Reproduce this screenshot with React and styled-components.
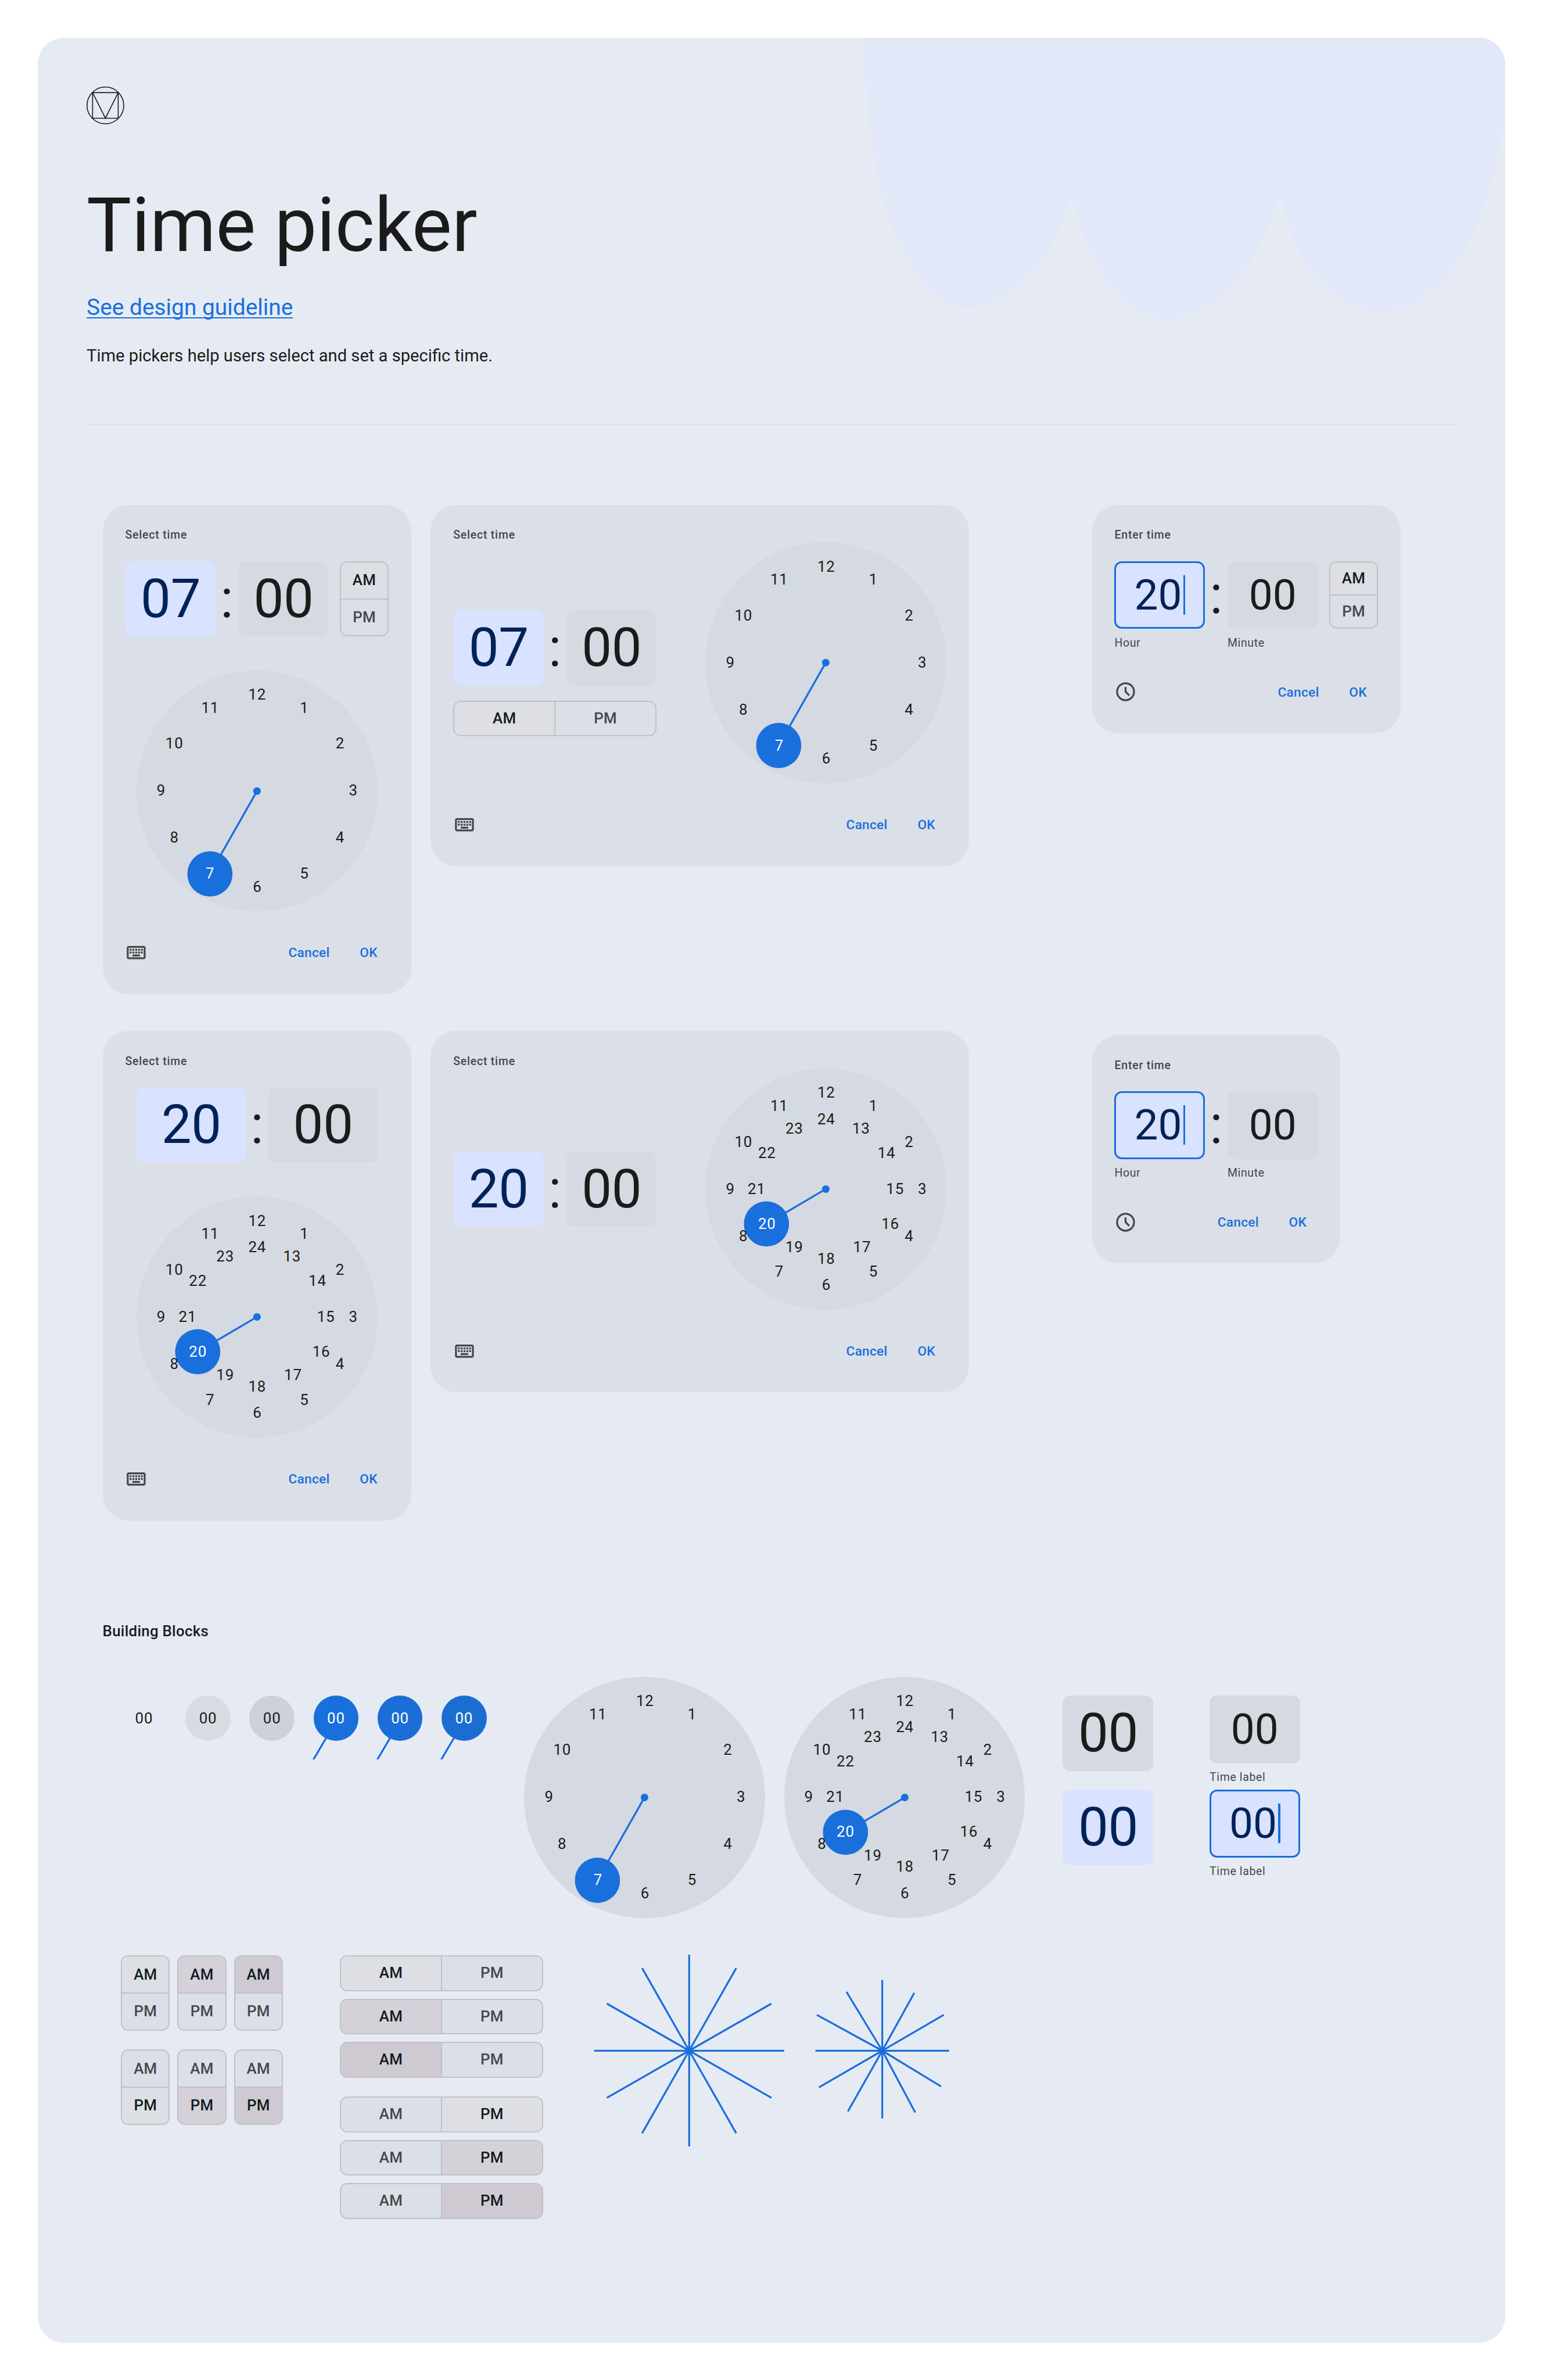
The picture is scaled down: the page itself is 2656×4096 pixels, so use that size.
import React from 'react';
import styled, { createGlobalStyle, css } from 'styled-components';

const color = {
  sheet: '#e6ebf3',
  scallop: '#e2e8f7',
  card: '#dbdfe7',
  face: '#d5d9e1',
  primary: '#196fdc',
  primaryContainer: '#d9e2ff',
  onPrimaryContainer: '#002257',
  ink: '#1b1b1b',
  muted: '#44474a',
  outline: '#c0c1c5',
  divider: '#e0dfe3',
  selectedInk: '#101a22',
};

const periodFill = {
  enabled: '#dedfe4',
  hovered: '#d5d1d9',
  pressed: '#cfc9d1',
};

const GlobalStyle = createGlobalStyle`
  html, body {
    margin: 0;
    background: #fff;
    overflow: hidden;
  }
  body {
    font-family: Roboto, "Liberation Sans", sans-serif;
    color: ${color.ink};
  }
  *, *::before, *::after { box-sizing: border-box; }
`;

/* The board is designed in dp and enlarged to the window as a whole. */
const Board = styled.main`
  zoom: 1.6204;
  width: 1639px;
  height: 2527.7px;
  padding: 40px;
`;

const Sheet = styled.div`
  position: relative;
  height: 2448px;
  border-radius: 28px;
  background: ${color.sheet};
  overflow: hidden;
`;

const Scallops = styled.svg`
  position: absolute;
  top: 0;
  right: 0;
  width: 682px;
  height: 300px;
  fill: ${color.scallop};
`;

const Header = styled.header`
  position: relative;
  display: flex;
  flex-direction: column;
  align-items: flex-start;
  height: 411px;
  margin: 0 52px;
  padding-top: 52px;
`;

const Logo = styled.svg`
  flex: none;
  width: 40px;
  height: 40px;
  fill: none;
  stroke: ${color.ink};
  stroke-width: 1;
`;

const Title = styled.h1`
  margin: 59.8px 0 0;
  font-size: 80px;
  line-height: 96px;
  font-weight: 400;
`;

const GuideLink = styled.a`
  margin-top: 22.5px;
  font-size: 24px;
  line-height: 32px;
  color: ${color.primary};
  text-decoration: underline;
  text-decoration-thickness: 1.3px;
  text-underline-offset: 2.2px;
  text-decoration-skip-ink: none;
`;

const Lead = styled.p`
  margin: 22px 0 0;
  font-size: 18px;
  line-height: 28px;
`;

const Rule = styled.hr`
  width: 100%;
  height: 1px;
  margin: auto 0 0;
  border: 0;
  background: ${color.divider};
`;

const Pickers = styled.section`
  display: flex;
  flex-direction: column;
  gap: 39px;
  padding: 85px 0 0 69px;
`;

const PickerRow = styled.div`
  display: flex;
  align-items: flex-start;
  gap: 20.5px;
`;

const Card = styled.article`
  display: flex;
  flex-direction: column;
  flex: none;
  width: ${(p) => p.$width}px;
  padding: 24px;
  border-radius: 28px;
  background: ${color.card};
`;

const InputCard = styled(Card)`
  margin: ${(p) => p.$drop || 0}px 0 0 110px;
`;

const Headline = styled.div`
  height: 16px;
  padding-top: 0.6px;
  font-size: 12px;
  line-height: 16px;
  font-weight: 500;
  letter-spacing: 0.5px;
  color: ${color.muted};
`;

const TimeRow = styled.div`
  display: flex;
  justify-content: ${(p) => (p.$centered ? 'center' : 'flex-start')};
  margin-top: ${(p) => p.$top || 0}px;
`;

const Separator = styled.div`
  display: flex;
  align-items: center;
  justify-content: center;
  width: 24px;
  height: ${(p) => p.$height || 80}px;
  font-size: 57px;
  line-height: 64px;
`;

const selectorTone = css`
  background: ${(p) => (p.$active ? color.primaryContainer : color.face)};
  color: ${(p) => (p.$active ? color.onPrimaryContainer : color.ink)};
`;

const Selector = styled.div`
  display: flex;
  align-items: center;
  justify-content: center;
  width: ${(p) => p.$width || 96}px;
  height: 80px;
  padding-left: 0.5px;
  border-radius: 8px;
  font-size: 57px;
  line-height: 64px;
  letter-spacing: -0.2px;
  ${selectorTone}
`;

const Field = styled.div`
  width: 96px;
`;

const FieldBox = styled.div`
  display: flex;
  align-items: center;
  justify-content: center;
  gap: 1.4px;
  height: 72px;
  border: ${(p) => (p.$active ? `2px solid ${color.primary}` : '0')};
  border-radius: 8px;
  font-size: 45px;
  line-height: 52px;
  ${selectorTone}
`;

const Caret = styled.i`
  width: 2px;
  height: 42px;
  background: ${color.primary};
`;

const FieldLabel = styled.div`
  margin-top: 7px;
  font-size: 12px;
  line-height: 16px;
  letter-spacing: 0.4px;
  color: ${color.muted};
`;

const Period = styled.div`
  display: flex;
  flex: none;
  flex-direction: ${(p) => (p.$wide ? 'row' : 'column')};
  width: ${(p) => (p.$wide ? 216 : 52)}px;
  height: ${(p) => (p.$wide ? 38 : p.$height || 80)}px;
  border: 1.25px solid ${color.outline};
  border-radius: 8px;
  background: ${color.card};
  overflow: hidden;
`;

const PeriodHalf = styled.div`
  display: flex;
  flex: 1;
  align-items: center;
  justify-content: center;
  padding-bottom: 0.4px;
  font-size: 16px;
  line-height: 24px;
  font-weight: 500;
  letter-spacing: 0.15px;
  color: ${(p) => (p.$fill ? color.selectedInk : color.muted)};
  background: ${(p) => p.$fill || 'transparent'};

  &:last-child {
    border: 0 solid ${color.outline};
    border-width: ${(p) => (p.$wide ? '0 0 0 1.25px' : '1.25px 0 0')};
  }
`;

const Face = styled.div`
  position: relative;
  flex: none;
  width: 256px;
  height: 256px;
  border-radius: 50%;
  background: ${color.face};
`;

const Hand = styled.svg`
  position: absolute;
  inset: 0;
  width: 256px;
  height: 256px;
  fill: ${color.primary};
  stroke: none;

  line {
    stroke: ${color.primary};
    stroke-width: 2;
  }
`;

const Numeral = styled.span`
  position: absolute;
  left: ${(p) => 128.3 + p.$x}px;
  top: ${(p) => 127.5 + p.$y}px;
  transform: translate(-50%, -50%);
  font-size: 16px;
  line-height: 24px;
  letter-spacing: 0.5px;
  color: ${(p) => (p.$active ? '#fff' : color.ink)};
`;

const Actions = styled.footer`
  display: flex;
  align-items: center;
  gap: 8px;
  height: 40px;
  margin-top: 24px;
`;

const ActionIcon = styled.svg`
  width: 24px;
  height: 24px;
  margin-right: auto;
  fill: ${color.muted};
`;

const TextButton = styled.button`
  height: 40px;
  padding: 1px 12px 0;
  border: 0;
  background: none;
  font: 500 14px/20px Roboto, "Liberation Sans", sans-serif;
  letter-spacing: 0.16px;
  color: ${color.primary};
`;

const Landscape = styled.div`
  display: flex;
  justify-content: space-between;
`;

const LandscapeInputs = styled.div`
  display: flex;
  flex-direction: column;
  gap: 16px;
  padding-top: ${(p) => p.$top}px;
`;

const BlocksTitle = styled.h2`
  margin: 105.5px 0 0 69px;
  font-size: 16px;
  line-height: 24px;
  font-weight: 500;
  letter-spacing: 0.15px;
`;

const BlocksRow = styled.div`
  display: flex;
  align-items: flex-start;
  margin: ${(p) => p.$top}px 0 0 ${(p) => p.$left}px;
`;

const Group = styled.div`
  display: flex;
  flex: none;
  flex-direction: ${(p) => (p.$column ? 'column' : 'row')};
  gap: ${(p) => p.$gap}px;
  margin-left: ${(p) => p.$left || 0}px;
  padding-top: ${(p) => p.$top || 0}px;
`;

const Chip = styled.div`
  position: relative;
  display: flex;
  align-items: center;
  justify-content: center;
  width: 48px;
  height: 48px;
  border-radius: 50%;
  font-size: 16px;
  line-height: 24px;
  letter-spacing: 0.5px;
  background: ${(p) => p.$fill};
  color: ${(p) => (p.$active ? '#fff' : color.ink)};
`;

const ChipTail = styled.svg`
  position: absolute;
  left: -4px;
  top: 44px;
  width: 24px;
  height: 24px;
  stroke: ${color.primary};
  stroke-width: 2;
`;

const Rays = styled.svg`
  flex: none;
  margin: -1px 0 0 ${(p) => p.$left}px;
  stroke: ${color.primary};
  stroke-width: 2;
`;

const outerHours = [
  [12, 0, -102], [1, 50, -88], [2, 88, -50], [3, 102, 0], [4, 88, 50], [5, 50, 88],
  [6, 0, 102], [7, -50, 88], [8, -88, 50], [9, -102, 0], [10, -88, -50], [11, -50, -88],
];

const innerHours = [
  [24, 0, -74], [13, 37, -64], [14, 64, -38], [15, 73, 0], [16, 68, 37], [17, 38, 62],
  [18, 0, 74], [19, -34, 62], [20, -63, 37], [21, -74, 0], [22, -63, -38], [23, -34, -64],
];

function Clock({ hour, full }) {
  const hours = full ? [...outerHours, ...innerHours] : outerHours;
  const [, x, y] = hours.find(([n]) => n === hour);
  return (
    <Face>
      <Hand viewBox="-128 -128 256 256">
        <line x1="0" y1="0" x2={x} y2={y} />
        <circle r="4" />
        <circle cx={x} cy={y} r="24" />
      </Hand>
      {hours.map(([n, nx, ny]) => (
        <Numeral key={n} $x={nx} $y={ny} $active={n === hour}>{n}</Numeral>
      ))}
    </Face>
  );
}

function PeriodToggle({ wide, height, value = 'AM', state = 'enabled' }) {
  return (
    <Period $wide={wide} $height={height}>
      {['AM', 'PM'].map((half) => (
        <PeriodHalf key={half} $wide={wide} $fill={half === value ? periodFill[state] : undefined}>
          {half}
        </PeriodHalf>
      ))}
    </Period>
  );
}

function TimeField({ value, label, active }) {
  return (
    <Field>
      <FieldBox $active={active}>
        <span>{value}</span>
        {active && <Caret />}
      </FieldBox>
      <FieldLabel>{label}</FieldLabel>
    </Field>
  );
}

const KeyboardIcon = () => (
  <ActionIcon viewBox="0 0 24 24">
    <path
      fillRule="evenodd"
      d="M4 19q-.825 0-1.412-.587T2 17V7q0-.825.588-1.412T4 5h16q.825 0 1.413.588T22 7v10q0 .825-.587 1.413T20 19zM4 17h16V7H4z"
    />
    <path d="M5 8h2v2H5zM8 8h2v2H8zM11 8h2v2h-2zM14 8h2v2h-2zM17 8h2v2h-2zM5 11h2v2H5zM8 11h2v2H8zM11 11h2v2h-2zM14 11h2v2h-2zM17 11h2v2h-2zM8 14h8v2H8z" />
  </ActionIcon>
);

const ScheduleIcon = () => (
  <ActionIcon viewBox="0 0 24 24">
    <path
      fillRule="evenodd"
      d="M12 2a10 10 0 1 0 0 20a10 10 0 1 0 0-20zM12 4a8 8 0 1 1 0 16a8 8 0 1 1 0-16z"
    />
    <path d="m15.3 16.7 1.4-1.4-3.7-3.7V7h-2v5.4z" />
  </ActionIcon>
);

function CardActions({ icon }) {
  return (
    <Actions>
      {icon}
      <TextButton>Cancel</TextButton>
      <TextButton>OK</TextButton>
    </Actions>
  );
}

function PortraitPicker({ hour, value, full }) {
  const width = full ? 116 : 96;
  return (
    <Card $width={328}>
      <Headline>Select time</Headline>
      <TimeRow $top={20} $centered={full}>
        <Selector $width={width} $active>{value}</Selector>
        <Separator>:</Separator>
        <Selector $width={width}>00</Selector>
        {!full && <Group $left={12}><PeriodToggle /></Group>}
      </TimeRow>
      <Group $left={12} $top={36}><Clock hour={hour} full={full} /></Group>
      <CardActions icon={<KeyboardIcon />} />
    </Card>
  );
}

function LandscapePicker({ hour, value, full }) {
  return (
    <Card $width={572}>
      <Headline>Select time</Headline>
      <Landscape>
        <LandscapeInputs $top={full ? 88 : 72}>
          <TimeRow>
            <Selector $active>{value}</Selector>
            <Separator>:</Separator>
            <Selector>00</Selector>
          </TimeRow>
          {!full && <PeriodToggle wide />}
        </LandscapeInputs>
        <Clock hour={hour} full={full} />
      </Landscape>
      <CardActions icon={<KeyboardIcon />} />
    </Card>
  );
}

function InputPicker({ full, drop }) {
  return (
    <InputCard $width={full ? 264 : 328} $drop={drop}>
      <Headline>Enter time</Headline>
      <TimeRow $top={20}>
        <TimeField value="20" label="Hour" active />
        <Separator $height={72}>:</Separator>
        <TimeField value="00" label="Minute" />
        {!full && <Group $left={12}><PeriodToggle height={72} /></Group>}
      </TimeRow>
      <CardActions icon={<ScheduleIcon />} />
    </InputCard>
  );
}

const chips = [
  { fill: 'transparent' },
  { fill: '#d7dbe2' },
  { fill: '#cdd1da' },
  { fill: color.primary, active: true },
  { fill: '#1b6ed7', active: true },
  { fill: '#1c6dd2', active: true },
];

const outerRays = [
  [0, -102], [50, -87.7], [87.4, -50], [101, 0], [87.4, 50], [50, 87.7],
  [0, 102], [-50, 87.7], [-87.4, 50], [-101, 0], [-87.4, -50], [-50, -87.7],
];

const innerRays = [
  [0, -75], [34, -61.4], [65.3, -38], [71, 0], [62.5, 38], [35, 65.5],
  [0, 72], [-36.5, 64.5], [-67.3, 39], [-71, 0], [-69.5, -38], [-38, -62.5],
];

function RayBurst({ rays, left, size }) {
  return (
    <Rays $left={left} width={size} height="204" viewBox={`${-size / 2} -102 ${size} 204`}>
      {rays.map(([x, y]) => <line key={`${x} ${y}`} x1="0" y1="0" x2={x} y2={y} />)}
    </Rays>
  );
}

const states = ['enabled', 'hovered', 'pressed'];

function PeriodStates({ wide, value }) {
  return (
    <Group $column={wide} $gap={8}>
      {states.map((s) => <PeriodToggle key={s} wide={wide} value={value} state={s} />)}
    </Group>
  );
}

export default function App() {
  return (
    <>
      <GlobalStyle />
      <Board>
        <Sheet>
          <Scallops viewBox="1834 80 1364 600">
            <path d="M1836 80C1838 390 1915 654.5 2065 654.5C2140 654.5 2240 565 2277 410C2303 568 2395 677 2477 677C2575 677 2683 570 2720 402C2745 560 2830 662 2935 662C3070 662 3178 470 3198 224V80Z" />
          </Scallops>
          <Header>
            <Logo viewBox="0 0 40 40">
              <circle cx="20" cy="20" r="19.5" />
              <path d="M6.4 6.4H33.6V33.6H6.4ZM6.4 6.4L20 33.6L33.6 6.4" />
            </Logo>
            <Title>Time picker</Title>
            <GuideLink>See design guideline</GuideLink>
            <Lead>Time pickers help users select and set a specific time.</Lead>
            <Rule />
          </Header>

          <Pickers>
            <PickerRow>
              <PortraitPicker hour={7} value="07" />
              <LandscapePicker hour={7} value="07" />
              <InputPicker />
            </PickerRow>
            <PickerRow>
              <PortraitPicker hour={20} value="20" full />
              <LandscapePicker hour={20} value="20" full />
              <InputPicker full drop={4} />
            </PickerRow>
          </Pickers>

          <BlocksTitle>Building Blocks</BlocksTitle>
          <BlocksRow $top={36.5} $left={89}>
            <Group $gap={20} $top={20}>
              {chips.map(({ fill, active }, i) => (
                <Chip key={i} $fill={fill} $active={active}>
                  00
                  {active && (
                    <ChipTail viewBox="-4 44 24 24">
                      <line x1="15.3" y1="42.3" x2="-1.2" y2="70.3" />
                    </ChipTail>
                  )}
                </Chip>
              ))}
            </Group>
            <Group $gap={20} $left={40}>
              <Clock hour={7} />
              <Clock hour={20} full />
            </Group>
            <Group $column $gap={20} $left={40} $top={20}>
              <Selector>00</Selector>
              <Selector $active>00</Selector>
            </Group>
            <Group $column $gap={5} $left={60} $top={20}>
              <TimeField value="00" label="Time label" />
              <TimeField value="00" label="Time label" active />
            </Group>
          </BlocksRow>

          <BlocksRow $top={40} $left={88.5}>
            <Group $column $gap={20}>
              <PeriodStates value="AM" />
              <PeriodStates value="PM" />
            </Group>
            <Group $column $gap={20} $left={60.5}>
              <PeriodStates wide value="AM" />
              <PeriodStates wide value="PM" />
            </Group>
            <Group>
              <RayBurst rays={outerRays} left={53} size={204} />
              <RayBurst rays={innerRays} left={31} size={144} />
            </Group>
          </BlocksRow>
        </Sheet>
      </Board>
    </>
  );
}
